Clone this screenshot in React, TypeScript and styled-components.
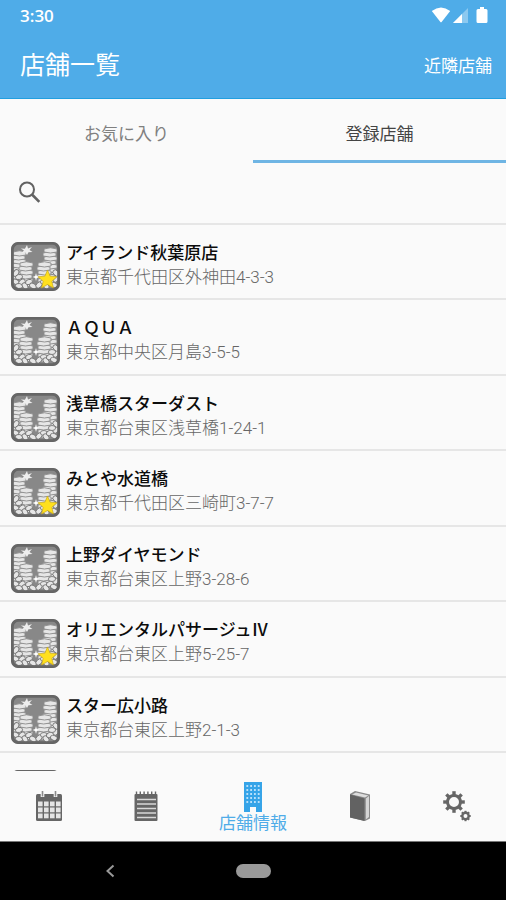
import React from 'react';
import styled, { createGlobalStyle, css } from 'styled-components';

const blue = '#4face8';
const iconGray = '#666';

const GlobalStyle = createGlobalStyle`
  * { box-sizing: border-box; }
  body {
    margin: 0;
    background: #fafafa;
    font-family: Roboto, "Noto Sans CJK JP", sans-serif;
  }
  button, input { font: inherit; border: 0; background: none; padding: 0; }
  button { cursor: pointer; }
  svg { display: block; }
`;

const Screen = styled.div`
  display: flex;
  flex-direction: column;
  height: 100vh;
  overflow: hidden;
  background: #fafafa;
`;

const Header = styled.header`
  flex: none;
  background: ${blue};
  border-bottom: 1px solid #219fe0;
  color: #fff;
`;

const StatusBar = styled.div`
  display: flex;
  align-items: center;
  justify-content: space-between;
  height: 30px;
  padding: 0 18px 0 20px;
  font-family: "Open Sans", sans-serif;
  font-size: 17px;
  font-weight: 600;
`;

const StatusIcons = styled.div`
  display: flex;
  align-items: center;
  gap: 1px;
`;

const AppBar = styled.div`
  display: flex;
  align-items: center;
  justify-content: space-between;
  height: 68px;
  padding: 4px 14px 0 20px;
`;

const Title = styled.h1`
  margin: 0;
  font-size: 25px;
  line-height: 36px;
  font-weight: 400;
`;

const HeaderAction = styled.button`
  color: #fff;
  font-size: 17px;
  line-height: 24px;
  font-weight: 400;
`;

const Tabs = styled.div`
  display: flex;
  flex: none;
  height: 64px;
`;

const Tab = styled.button<{ $active?: boolean }>`
  flex: 1;
  padding-top: 8px;
  color: ${p => (p.$active ? '#444' : '#808080')};
  font-size: 17px;
  line-height: 24px;
  border-bottom: 3px solid ${p => (p.$active ? '#6fb5e4' : 'transparent')};
`;

const SearchBar = styled.label`
  display: flex;
  flex: none;
  align-items: center;
  gap: 12px;
  height: 62px;
  padding: 0 16px 2px;
  border-bottom: 2px solid #e6e6e6;
`;

const SearchInput = styled.input`
  flex: 1;
  min-width: 0;
  font-size: 17px;
  outline: none;
`;

const StoreList = styled.ul`
  flex: 1;
  min-height: 0;
  margin: 0;
  padding: 0;
  list-style: none;
  overflow-y: auto;
  scrollbar-width: none;
`;

const StoreItem = styled.li`
  height: 75px;
  border-bottom: 2px solid #e6e6e6;
  &:nth-child(even) { height: 76px; }
`;

const StoreButton = styled.button`
  display: flex;
  align-items: flex-start;
  gap: 6px;
  width: 100%;
  height: 100%;
  padding: 16px 11px 0;
  text-align: left;
`;

const StoreText = styled.span`
  display: flex;
  flex-direction: column;
  line-height: 24px;
  font-size: 17px;
  white-space: nowrap;
`;

const StoreName = styled.span`
  font-weight: 500;
  color: #0c0c0c;
`;

const StoreAddress = styled.span`
  font-weight: 300;
  color: #666;
`;

const BottomNav = styled.nav`
  display: flex;
  flex: none;
  height: 71px;
  border-bottom: 1px solid #777;
`;

const NavItem = styled.button<{ $active?: boolean }>`
  display: flex;
  flex: 1 1 0;
  flex-direction: column;
  align-items: center;
  justify-content: center;
  min-width: 0;
  color: ${iconGray};
  ${p => p.$active && css`
    flex-grow: 1.2;
    justify-content: flex-start;
    padding-top: 11px;
    color: ${blue};
  `}
`;

const NavLabel = styled.span`
  font-size: 17px;
  line-height: 22px;
`;

const SystemNav = styled.div`
  display: grid;
  grid-template-columns: 1fr auto 1fr;
  align-items: center;
  flex: none;
  height: 58px;
  background: #000;
`;

const BackButton = styled.button`
  justify-self: center;
  margin-right: 16px;
`;

const HomePill = styled.button`
  width: 35px;
  height: 14px;
  border-radius: 7px;
  background: #999;
`;

const CoinStack = ({ x, y, n }: { x: number; y: number; n: number }) => (
  <g>
    {Array.from({ length: n }, (_, i) => n - 1 - i).map(i => (
      <path
        key={i}
        d={`M${x - (i % 2)} ${y + i * 4}q6.500-2.500 13 0v3q-6.500 2-13 0z`}
        fill="#e6e6e6"
        stroke="#8a8a8a"
        strokeWidth=".9"
      />
    ))}
  </g>
);

const pebbles = [
  [5, 32], [8, 36], [5, 41], [11, 41], [8, 45], [14, 45], [18, 41], [22, 45], [28, 44],
  [33, 41], [35, 45], [39, 41], [43, 44], [45, 38], [41, 36], [45, 32],
];

const StoreIcon = ({ starred, id }: { starred?: boolean; id: string }) => (
  <svg width="49" height="50" viewBox="0 0 49 50" aria-hidden="true">
    <clipPath id={id}><rect x="2" y="3" width="45" height="45" rx="5" /></clipPath>
    <rect y="1" width="49" height="49" rx="7" fill="#666" />
    <g clipPath={`url(#${id})`}>
      <rect width="49" height="50" fill="#888" />
      <CoinStack x={2} y={11} n={7} />
      <CoinStack x={33} y={8} n={8} />
      <CoinStack x={9} y={22} n={6} />
      <CoinStack x={27} y={22} n={6} />
      {pebbles.map(([x, y], i) => (
        <ellipse key={i} cx={x} cy={y} rx="3.600" ry="2.500" transform={`rotate(${(i * 47) % 120 - 60} ${x} ${y})`}
          fill="#e6e6e6" stroke="#777" strokeWidth=".9" />
      ))}
      <path d="M16 4l1 3.500 4-1.500-2.500 3 3 2-4 .2-1.500 2.800-1.600-2.500-4 .8 2.500-2.800-3-2 4 .2z" fill="#eee" />
      <path d="M25 32l.8 3 2.700 1-2.700 1-.8 3-.8-3-2.700-1 2.700-1z" fill="#fff" />
    </g>
    <rect x="1.500" y="2.500" width="46" height="46" rx="6" fill="none" stroke="#666" strokeWidth="2.600" />
    {starred && (
      <path d="M36.500 29l2.600 6.200 6.900.6-5.200 4.500 1.600 6.700-5.900-3.500-5.900 3.500 1.600-6.700-5.200-4.500 6.900-.6z"
        fill="#ffe01d" stroke="#c9a91d" strokeWidth=".7" strokeLinejoin="round" />
    )}
  </svg>
);

const WifiIcon = () => (
  <svg width="20" height="16" viewBox="0 0 20 16" aria-hidden="true">
    <path d="M.8 4Q10-3.200 19.200 4L10.800 14.800q-.8 1-1.600 0z" fill="#fff" />
  </svg>
);

const SignalIcon = () => (
  <svg width="17" height="16" viewBox="0 0 17 16" aria-hidden="true">
    <path d="M1 16L16 1v15z" fill="#fff" opacity=".35" />
    <path d="M1 16L10 7V16z" fill="#fff" />
  </svg>
);

const BatteryIcon = () => (
  <svg width="18" height="18" viewBox="0 0 18 18" aria-hidden="true">
    <path d="M10 1h4v2h2q1.500 0 1.500 1.500v11q0 1.500-1.500 1.500H8q-1.500 0-1.500-1.500v-11Q6.500 3 8 3h2z" fill="#fff" />
  </svg>
);

const SearchIcon = () => (
  <svg width="26" height="26" viewBox="0 0 26 26" fill="none" stroke="#626262" aria-hidden="true">
    <circle cx="11" cy="10.500" r="7" strokeWidth="2" />
    <path d="M16 15.500l7.300 7.300" strokeWidth="2.600" />
  </svg>
);

const CalendarIcon = () => (
  <svg width="28" height="32" viewBox="0 0 28 32" aria-hidden="true">
    <rect x="1" y="4" width="26" height="27" rx="1.500" fill="currentColor" />
    <path d="M7.500 1v6M20.500 1v6" stroke="#fafafa" strokeWidth="3.600" />
    <path d="M7.500 1v5.500M20.500 1v5.500" stroke="#8a8a8a" strokeWidth="1.600" />
    {[11.5, 17.5, 23.5].map(y =>
      [3, 9, 15, 21].map(x => (
        <rect key={`${x}-${y}`} x={x} y={y} width="4.600" height="4.800" fill="#e4e4e4" />
      )),
    )}
  </svg>
);

const NotepadIcon = () => (
  <svg width="26" height="32" viewBox="0 0 26 32" aria-hidden="true">
    <rect x="1.500" y="4" width="23" height="27" rx="1" fill="currentColor" />
    <path d="M3.500 1.500v4M7.300 1.500v4M11.100 1.500v4M14.900 1.500v4M18.700 1.500v4M22.500 1.500v4" stroke="currentColor" strokeWidth="1.400" />
    <path d="M4 9.500h19M4 14h19M4 18.500h19M4 23h19M4 27.500h19" stroke="#d8d8d8" strokeWidth="1.500" />
  </svg>
);

const BuildingIcon = () => (
  <svg width="20" height="30" viewBox="0 0 20 30" aria-hidden="true">
    <path d="M1 0h18v30h-6v-5H7v5H1z" fill="#36a4e8" />
    {[3, 7, 11, 15, 19].map(y =>
      [3.4, 7.2, 11, 14.8].map(x => (
        <rect key={`${x}-${y}`} x={x} y={y} width="1.800" height="2" fill="#b9e0fa" />
      )),
    )}
  </svg>
);

const BookIcon = () => (
  <svg width="22" height="32" viewBox="0 0 22 32" aria-hidden="true">
    <path d="M1 4L6 1l15 3.500v24L16 31 1 27.500z" fill="#8a8a8a" />
    <path d="M3 4.500L7 2.500l12.500 3-3.500 2z" fill="#ddd" />
    <path d="M16.800 8.500L20 6v21l-3.200 2.500z" fill="#d4d4d4" />
    <path d="M1 4.500l14.500 4V31L1 27.500z" fill="#626262" />
  </svg>
);

const GearsIcon = () => (
  <svg width="28" height="32" viewBox="0 0 28 32" fill="none" stroke="currentColor" aria-hidden="true">
    <circle cx="11" cy="12" r="6.500" strokeWidth="3" />
    <g strokeWidth="3.400">
      {[0, 45, 90, 135, 180, 225, 270, 315].map(a => (
        <path key={a} d="M11 1.200v4" transform={`rotate(${a} 11 12)`} />
      ))}
    </g>
    <circle cx="22.500" cy="26" r="3.200" strokeWidth="2.400" />
    <g strokeWidth="2">
      {[0, 45, 90, 135, 180, 225, 270, 315].map(a => (
        <path key={a} d="M22.500 20.800v2" transform={`rotate(${a} 22.500 26)`} />
      ))}
    </g>
  </svg>
);

const stores = [
  { name: 'アイランド秋葉原店', address: '東京都千代田区外神田4-3-3', starred: true },
  { name: 'ＡＱＵＡ', address: '東京都中央区月島3-5-5' },
  { name: '浅草橋スターダスト', address: '東京都台東区浅草橋1-24-1' },
  { name: 'みとや水道橋', address: '東京都千代田区三崎町3-7-7', starred: true },
  { name: '上野ダイヤモンド', address: '東京都台東区上野3-28-6' },
  { name: 'オリエンタルパサージュⅣ', address: '東京都台東区上野5-25-7', starred: true },
  { name: 'スター広小路', address: '東京都台東区上野2-1-3' },
  { name: '', address: '' },
];

export default function App() {
  return (
    <>
      <GlobalStyle />
      <Screen>
        <Header>
          <StatusBar>
            <span>3:30</span>
            <StatusIcons>
              <WifiIcon />
              <SignalIcon />
              <BatteryIcon />
            </StatusIcons>
          </StatusBar>
          <AppBar>
            <Title>店舗一覧</Title>
            <HeaderAction>近隣店舗</HeaderAction>
          </AppBar>
        </Header>
        <Tabs role="tablist">
          <Tab role="tab" aria-selected={false}>お気に入り</Tab>
          <Tab role="tab" aria-selected $active>登録店舗</Tab>
        </Tabs>
        <SearchBar>
          <SearchIcon />
          <SearchInput type="search" aria-label="店舗を検索" />
        </SearchBar>
        <StoreList>
          {stores.map((s, i) => (
            <StoreItem key={i}>
              <StoreButton>
                <StoreIcon id={`store-icon-${i}`} starred={s.starred} />
                <StoreText>
                  <StoreName>{s.name}</StoreName>
                  <StoreAddress>{s.address}</StoreAddress>
                </StoreText>
              </StoreButton>
            </StoreItem>
          ))}
        </StoreList>
        <BottomNav>
          <NavItem aria-label="カレンダー"><CalendarIcon /></NavItem>
          <NavItem aria-label="メモ"><NotepadIcon /></NavItem>
          <NavItem $active aria-current="page">
            <BuildingIcon />
            <NavLabel>店舗情報</NavLabel>
          </NavItem>
          <NavItem aria-label="データ"><BookIcon /></NavItem>
          <NavItem aria-label="設定"><GearsIcon /></NavItem>
        </BottomNav>
        <SystemNav>
          <BackButton aria-label="戻る">
            <svg width="10" height="14" viewBox="0 0 10 14" fill="none" stroke="#999" strokeWidth="2" aria-hidden="true">
              <path d="M8.500 1.500L2.500 7l6 5.500" />
            </svg>
          </BackButton>
          <HomePill aria-label="ホーム" />
        </SystemNav>
      </Screen>
    </>
  );
}
